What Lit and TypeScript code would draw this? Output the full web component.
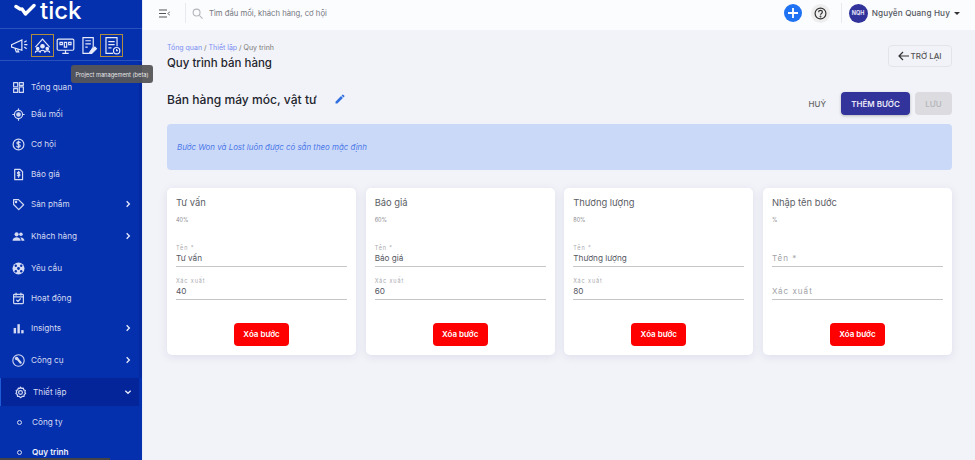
import { LitElement, html, css, svg } from "lit";
import { customElement } from "lit/decorators.js";

const w = (b: any, vb = "0 0 24 24") => html`<svg class="ic" viewBox=${vb} fill="none" stroke="currentColor" stroke-width="2.200" stroke-linecap="round" stroke-linejoin="round">${b}</svg>`;

const icons: Record<string, any> = {
  grid: w(svg`<rect x="3" y="3" width="7.500" height="8"/><rect x="13.500" y="3" width="7.500" height="5"/><rect x="3" y="14" width="7.500" height="7"/><rect x="13.500" y="11" width="7.500" height="10"/>`),
  target: w(svg`<circle cx="12" cy="12" r="7.500"/><circle cx="12" cy="12" r="3.200" fill="currentColor"/><path d="M12 1.500v3M12 19.500v3M1.500 12h3M19.500 12h3"/>`),
  dollar: w(svg`<circle cx="12" cy="12" r="10"/><path d="M15 8.500c-.6-1-1.700-1.500-3-1.500-1.700 0-3 .9-3 2.400 0 3.300 6.200 1.800 6.200 5 0 1.600-1.400 2.600-3.200 2.600-1.400 0-2.600-.6-3.200-1.700M12 5.500v13"/>`),
  doc: w(svg`<path d="M5 2.500h10l4.500 4.500v14.500H5z"/><path d="M14.500 8.500c-.5-.6-1.300-1-2.300-1-1.300 0-2.200.7-2.200 1.700 0 2.300 4.700 1.200 4.700 3.600 0 1-1 1.700-2.400 1.700-1 0-1.900-.4-2.300-1.100M12.200 6v11"/>`),
  tag: w(svg`<path d="M3 3h9l9.500 9.500-9 9L3 12z"/><circle cx="7.500" cy="7.500" r="1.200" fill="currentColor"/>`),
  people: html`<svg class="ic" viewBox="0 0 24 24" fill="currentColor"><circle cx="8.500" cy="8" r="3.800"/><circle cx="16.500" cy="8" r="3.300"/><path d="M1 20c0-4 3.500-6.500 7.500-6.500S16 16 16 20zM17.500 20c0-2.500-.8-4.600-2.500-6 4-.7 8 1.800 8 6z"/></svg>`,
  support: html`<svg class="ic" viewBox="0 0 24 24"><circle cx="12" cy="12" r="11" fill="currentColor"/><g fill="#0530ad"><circle cx="12" cy="12" r="2.600"/><circle cx="7" cy="7" r="2.200"/><circle cx="17" cy="7" r="2.200"/><circle cx="7" cy="17" r="2.200"/><circle cx="17" cy="17" r="2.200"/></g></svg>`,
  cal: w(svg`<rect x="3" y="4.500" width="18" height="17" rx="1.500"/><path d="M3 9h18M7.500 2v4M16.500 2v4M8.500 15l2.500 2.500 4.500-5"/>`),
  bars: html`<svg class="ic" viewBox="0 0 24 24" fill="currentColor"><rect x="3" y="11" width="4.500" height="10"/><rect x="10" y="4" width="4.500" height="17"/><rect x="17" y="15" width="4.500" height="6"/></svg>`,
  tool: html`<svg class="ic" viewBox="0 0 24 24" fill="none" stroke="currentColor"><circle cx="12" cy="12" r="10.500" stroke-width="2"/><path d="M9 8l7 8" stroke-width="4" stroke-linecap="round"/><circle cx="8.500" cy="8.500" r="3.200" fill="currentColor" stroke="none"/></svg>`,
  gear: w(svg`<path d="M12 2l2 2.500 3.200-.5.800 3.100 3 1.200-1 3 1.500 2.700-2.600 1.800-.3 3.200-3.200.1L12 21.500l-2.400-2.400-3.200-.1-.3-3.200-2.600-1.800L5 11.300l-1-3 3-1.200.8-3.100 3.200.5z"/><circle cx="12" cy="12" r="3.500"/>`),
};

const menu = [
  ["grid", "Tổng quan", 0, 24], ["target", "Đầu mối", 0, 30], ["dollar", "Cơ hội", 0, 30], ["doc", "Báo giá", 0, 30],
  ["tag", "Sản phẩm", 1, 30], ["people", "Khách hàng", 1, 34], ["support", "Yêu cầu", 0, 30], ["cal", "Hoạt động", 0, 30],
  ["bars", "Insights", 1, 30], ["tool", "Công cụ", 1, 34],
] as const;

const steps = [
  { t: "Tư vấn", p: "40%", n: "Tư vấn", x: "40" },
  { t: "Báo giá", p: "60%", n: "Báo giá", x: "60" },
  { t: "Thương lượng", p: "80%", n: "Thương lượng", x: "80" },
  { t: "Nhập tên bước", p: "%", n: "", x: "" },
];

@customElement("app-root")
export class AppRoot extends LitElement {
  static styles = css`
    :host { display: flex; width: 975px; height: 460px; overflow: hidden; position: relative; background: #f2f3f8; font-family: Inter, "Noto Sans", sans-serif; color: #2a2c38; }
    .side { width: 142px; height: 460px; flex: none; background: #0530ad; color: #d3daf2; border-right: 1px solid #e8ebf5; overflow: hidden; display: flex; flex-direction: column; position: relative; }
    .side::after { content: ""; position: absolute; left: 139px; top: 62px; width: 3px; height: 316px; background: #0429a0; }
    .logo { height: 29px; flex: none; display: flex; align-items: center; gap: 4px; padding: 0 0 8px 14px; box-sizing: border-box; color: #fff; font-size: 24px; line-height: 21px; font-weight: 500; border-bottom: 1px solid #2a50bd; }
    .logo svg { width: 22px; height: 14px; }
    .tools { height: 32px; flex: none; display: flex; align-items: center; padding: 1px 0 0 8px; box-sizing: border-box; border-bottom: 1px solid #2a50bd; color: #e6eafa; }
    .tool { width: 23px; height: 23px; box-sizing: border-box; display: flex; align-items: center; justify-content: center; border: 1px solid transparent; }
    .tool.on { border-color: #b08d3c; }
    .tool svg { width: 19px; height: 19px; }
    .list { padding-top: 14px; display: flex; flex-direction: column; }
    .item { display: flex; align-items: center; padding: 0 10px 0 12px; font-size: 8.200px; flex: none; }
    .ic { width: 13px; height: 13px; flex: none; margin-right: 6px; }
    .chev { margin: 0 0 0 auto; width: 8px; height: 8px; color: #e6eafa; }
    .active { height: 28px; margin-top: 1px; width: 139px; box-sizing: border-box; background: #04249a; border-left: 1px solid #1f5bd8; padding: 0 7px 0 13px; position: relative; z-index: 1; }
    .sub { height: 30px; display: flex; align-items: center; font-size: 8.200px; padding-left: 17px; flex: none; }
    .sub i { width: 3px; height: 3px; border: 1px solid #d3daf2; border-radius: 50%; margin-right: 10px; }
    .sub.first { margin-top: 1px; }
    .sub.cur { font-weight: 600; color: #eef1fb; }
    .body { flex: 1; min-width: 0; display: flex; flex-direction: column; }
    .top { height: 30px; flex: none; box-sizing: border-box; background: #fbfcfe; display: flex; align-items: center; padding: 0 15px 4px 16px; }
    .burger { width: 11px; height: 9px; color: #555; margin-right: 15px; }
    .vline { width: 1px; height: 20px; background: #e9eaef; }
    .search { width: 11px; height: 11px; color: #b5b7bd; margin: 0 6px; }
    .ph { font-size: 7.700px; color: #75777f; }
    .right { margin-left: auto; display: flex; align-items: center; }
    .plus { width: 18px; height: 18px; border-radius: 50%; background: #1f72f2; display: flex; align-items: center; justify-content: center; }
    .plus svg { width: 10px; height: 10px; }
    .help { width: 19px; height: 19px; border-radius: 50%; background: #eeeeee; margin-left: 9px; display: flex; align-items: center; justify-content: center; }
    .help svg { width: 13px; height: 13px; }
    .right .vline { margin: 0 7px 0 11px; }
    .avatar { width: 19px; height: 19px; border-radius: 50%; background: #33339c; color: #e5e5f7; font-size: 5.500px; font-weight: 700; display: flex; align-items: center; justify-content: center; }
    .uname { font-size: 8.200px; color: #555861; margin-left: 4px; font-weight: 500; letter-spacing: .12px; }
    .caret { width: 0; height: 0; border: 3.500px solid transparent; border-top: 3.500px solid #333; border-bottom: 0; margin-left: 4px; }
    .main { padding: 13px 23px 0 24px; display: flex; flex-direction: column; }
    .head { display: flex; justify-content: space-between; align-items: flex-start; height: 41px; }
    .crumbs { font-size: 7px; color: #777; line-height: 10px; }
    .crumbs a { color: #7b8ef2; }
    h1 { margin: 2px 0 0; font-size: 11.500px; line-height: 16px; font-weight: 500; color: #23252e; }
    .back { margin-top: 2px; width: 64px; height: 22px; box-sizing: border-box; border: 1px solid #e3e4ea; border-radius: 4px; display: flex; align-items: center; justify-content: center; font-size: 8px; font-weight: 500; color: #555; }
    .back svg { width: 11px; height: 10px; color: #333; margin-right: 1px; }
    .row { height: 31px; display: flex; align-items: center; }
    .row h2 { margin: 0; font-size: 12.100px; font-weight: 500; color: #23252e; }
    .pencil { width: 12px; height: 12px; margin: 0 0 1px 17px; color: #2f6fe0; }
    .actions { margin: 8px 0 0 auto; display: flex; align-items: center; }
    .cancel { font-size: 8px; font-weight: 500; color: #666; margin-right: 15px; }
    .add { width: 69px; height: 23px; border-radius: 4px; background: #33339c; color: #e8e8f8; font-size: 8px; font-weight: 600; display: flex; align-items: center; justify-content: center; box-shadow: 0 1px 3px rgba(0,0,0,.25); }
    .save { width: 37px; height: 23px; margin-left: 5px; border-radius: 4px; background: #dcdce0; color: #b8b8bd; font-size: 8px; font-weight: 600; display: flex; align-items: center; justify-content: center; }
    .note { margin-top: 9px; height: 46px; background: #cad9f8; border-radius: 4px; display: flex; align-items: center; padding-left: 10px; font-size: 7.900px; font-style: italic; color: #4a78e8; }
    .cards { margin-top: 18px; display: grid; grid-template-columns: repeat(4, 1fr); gap: 9.500px; }
    .card { height: 167px; box-sizing: border-box; background: #fff; border-radius: 5px; box-shadow: 0 2px 8px rgba(70,80,150,.12); padding: 9px 9px 0; display: flex; flex-direction: column; }
    .t { font-size: 9.400px; line-height: 12px; color: #5c5e66; }
    .p { font-size: 5.500px; line-height: 8px; margin-top: 7px; color: #8a8b90; }
    .field { height: 33px; box-sizing: border-box; border-bottom: 1.500px solid #c6c6c9; display: flex; flex-direction: column; justify-content: flex-end; padding-bottom: 2px; }
    .field.first { margin-top: 9.500px; }
    .lab { font-size: 5.500px; letter-spacing: .9px; color: #a9aab0; line-height: 7px; margin-bottom: 1px; }
    .val { font-size: 8.200px; line-height: 11px; color: #55575f; }
    .hint { font-size: 8.100px; line-height: 11px; letter-spacing: 1px; color: #a2a3a8; }
    .field + .field { height: 33.500px; }
    .del { align-self: center; margin-top: 22.500px; width: 55px; height: 23px; border-radius: 4px; background: #fe0000; color: #fff; font-size: 8px; font-weight: 600; display: flex; align-items: center; justify-content: center; }
    .tip { position: absolute; left: 71px; top: 65px; width: 82px; height: 18px; border-radius: 3px; background: rgba(85,85,88,.95); color: #e6e6e6; font-size: 5.700px; display: flex; align-items: center; justify-content: center; z-index: 2; }
    .tip2 { position: absolute; left: 0; bottom: 0; width: 110px; height: 2px; background: #444; z-index: 2; }
  `;

  render() {
    return html`
      <aside class="side">
        <div class="logo">
          <svg viewBox="0 0 22 14" fill="none" stroke="#fff" stroke-width="3.400" stroke-linecap="round" stroke-linejoin="round"><path d="M2 3.500l4 2.500M8 6l3.500 5L20 2.500"/></svg>
          <span>tick</span>
        </div>
        <div class="tools">
          <span class="tool"><svg viewBox="0 0 24 24" fill="none" stroke="currentColor" stroke-width="1.500"><path d="M2 11l13-6v13L2 14zM6 15l2 5h3l-2-4M18 8l3-2M18 11h4M18 14l3 2"/></svg></span>
          <span class="tool on"><svg viewBox="0 0 24 24" fill="none" stroke="currentColor" stroke-width="1.400"><path d="M3 14L12 4l9 10"/><circle cx="12" cy="13" r="2.200" fill="currentColor"/><circle cx="6" cy="16" r="1.600" fill="currentColor"/><circle cx="18" cy="16" r="1.600" fill="currentColor"/><path d="M3 21c0-3 6-3 6 0M9 21c0-4 6-4 6 0M15 21c0-3 6-3 6 0"/></svg></span>
          <span class="tool"><svg viewBox="0 0 24 24" fill="none" stroke="currentColor" stroke-width="1.500"><rect x="1.500" y="4" width="21" height="14" rx="1.500"/><path d="M8 22h8M12 18v4M5 8h3v3H5zM10.500 8h3v6h-3zM16 8h3v3h-3z"/></svg></span>
          <span class="tool"><svg viewBox="0 0 24 24" fill="none" stroke="currentColor" stroke-width="1.500"><path d="M5 2h13v12l-5 8H5z"/><path d="M8 6h7M8 10h7M8 14h3"/><path d="M14 20l6-6 2 2-6 6h-2z" fill="currentColor"/></svg></span>
          <span class="tool on"><svg viewBox="0 0 24 24" fill="none" stroke="currentColor" stroke-width="1.500"><path d="M14 22H5V2h14v11"/><path d="M8 7h8M8 11h8M8 15h4"/><circle cx="18.500" cy="18.500" r="4"/><path d="M18.500 16.500v2h1.500"/></svg></span>
        </div>
        <nav class="list">
          ${menu.map(([i, l, c, h]) => html`<div class="item" style="height:${h}px">${icons[i]}<span>${l}</span>${c ? html`<svg class="ic chev" viewBox="0 0 24 24" fill="none" stroke="currentColor" stroke-width="4"><path d="M8 4l8 8-8 8"/></svg>` : ""}</div>`)}
          <div class="item active">${icons.gear}<span>Thiết lập</span><svg class="ic chev" viewBox="0 0 24 24" fill="none" stroke="currentColor" stroke-width="4"><path d="M4 8l8 8 8-8"/></svg></div>
          <div class="sub first"><i></i>Công ty</div>
          <div class="sub cur"><i></i>Quy trình</div>
        </nav>
      </aside>
      <div class="body">
        <header class="top">
          <svg class="burger" viewBox="0 0 11 9" fill="none" stroke="currentColor" stroke-width="1"><path d="M0 1h8M0 4.500h7M0 8h8M11 2.500L9 4.500l2 2"/></svg>
          <span class="vline"></span>
          <svg class="search" viewBox="0 0 24 24" fill="none" stroke="currentColor" stroke-width="2.500"><circle cx="10" cy="10" r="7.500"/><path d="M16 16l7 7"/></svg>
          <span class="ph">Tìm đầu mối, khách hàng, cơ hội</span>
          <div class="right">
            <span class="plus"><svg viewBox="0 0 10 10" stroke="#fff" stroke-width="1.800"><path d="M5 0v10M0 5h10"/></svg></span>
            <span class="help"><svg viewBox="0 0 24 24" fill="none" stroke="#333" stroke-width="2.200"><circle cx="12" cy="12" r="10"/><path d="M8.500 9.500c0-2 1.600-3.300 3.500-3.300s3.500 1.200 3.500 3c0 2.700-3.500 2.600-3.500 5.300"/><circle cx="12" cy="17.500" r=".6" fill="#333"/></svg></span>
            <span class="vline"></span>
            <span class="avatar">NQH</span>
            <span class="uname">Nguyễn Quang Huy</span>
            <span class="caret"></span>
          </div>
        </header>
        <main class="main">
          <div class="head">
            <div>
              <div class="crumbs"><a>Tổng quan</a> / <a>Thiết lập</a> / Quy trình</div>
              <h1>Quy trình bán hàng</h1>
            </div>
            <div class="back"><svg viewBox="0 0 11 10" fill="none" stroke="currentColor" stroke-width="1.200"><path d="M11 5H1M5 1L1 5l4 4"/></svg>TRỞ LẠI</div>
          </div>
          <div class="row">
            <h2>Bán hàng máy móc, vật tư</h2>
            <svg class="pencil" viewBox="0 0 24 24" fill="currentColor"><path d="M3 17.250V21h3.750L17.810 9.940l-3.750-3.750zM20.710 7.040a1 1 0 0 0 0-1.410l-2.340-2.340a1 1 0 0 0-1.410 0l-1.830 1.830 3.750 3.750z"/></svg>
            <div class="actions">
              <span class="cancel">HUỶ</span>
              <span class="add">THÊM BƯỚC</span>
              <span class="save">LƯU</span>
            </div>
          </div>
          <div class="note">Bước Won và Lost luôn được có sẵn theo mặc định</div>
          <div class="cards">
            ${steps.map((s) => html`
              <section class="card">
                <div class="t">${s.t}</div>
                <div class="p">${s.p}</div>
                <div class="field first">${s.n ? html`<span class="lab">Tên *</span><span class="val">${s.n}</span>` : html`<span class="hint">Tên *</span>`}</div>
                <div class="field">${s.x ? html`<span class="lab">Xác xuất</span><span class="val">${s.x}</span>` : html`<span class="hint">Xác xuất</span>`}</div>
                <div class="del">Xóa bước</div>
              </section>`)}
          </div>
        </main>
      </div>
      <div class="tip">Project management (beta)</div>
      <div class="tip2"></div>
    `;
  }
}
